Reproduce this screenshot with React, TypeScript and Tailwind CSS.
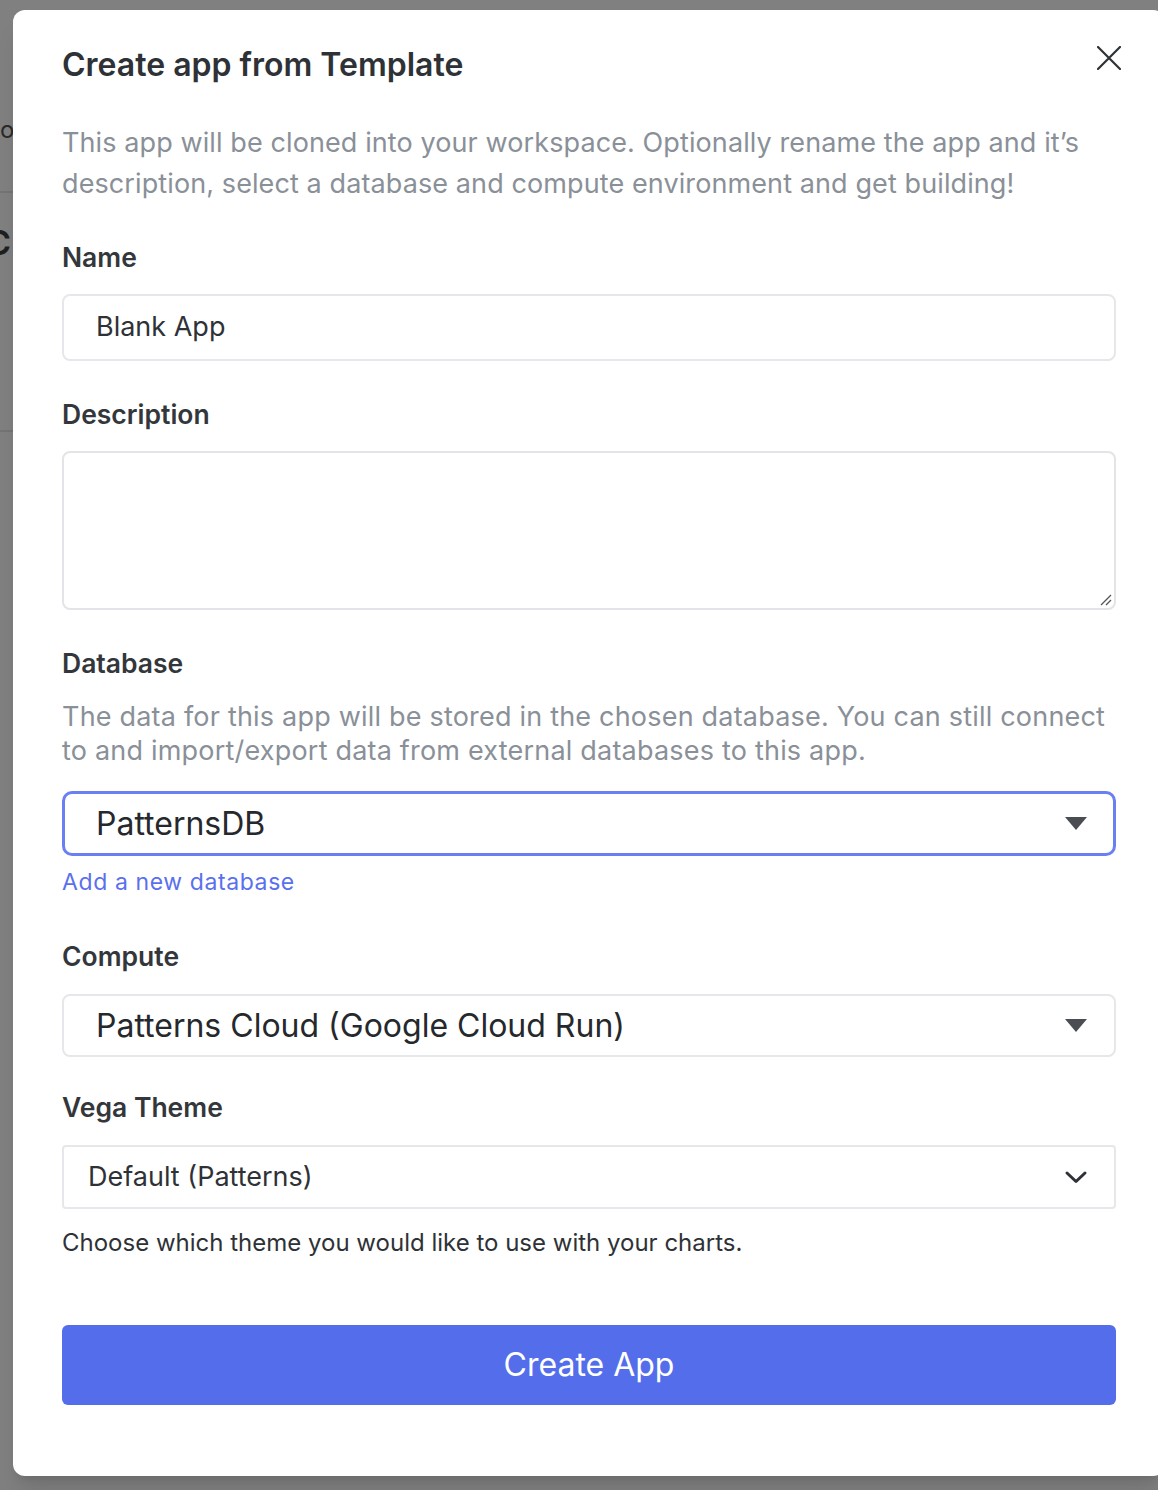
function Label({ children }: { children: React.ReactNode }) {
  return (
    <div className="text-[26.5px] font-semibold leading-[32px] text-[#33373b]">
      {children}
    </div>
  );
}

function CaretDown() {
  return (
    <svg width="22" height="13" viewBox="0 0 22 13" className="shrink-0">
      <path d="M0 0 L22 0 L11 13 Z" fill="#4a4d52" />
    </svg>
  );
}

export default function App() {
  return (
    <div
      className="relative h-[1490px] w-[1158px] overflow-hidden bg-[#808080] pl-[13px] pt-[10px]"
      style={{ fontFamily: "Inter, 'Noto Sans', sans-serif" }}
    >
      {/* page behind the overlay */}
      <div className="absolute left-0 top-[118px] text-[24px] leading-none text-[#2a2a2a]">o</div>
      <div className="absolute left-0 top-[191px] h-[2px] w-[13px] bg-[#747474]" />
      <div className="absolute left-[-14px] top-[226px] text-[34px] font-semibold leading-none text-[#1f1f1f]">C</div>
      <div className="absolute left-0 top-[430px] h-[2px] w-[13px] bg-[#747474]" />

      <div className="relative h-[1466px] w-[1152px] rounded-[12px] bg-white px-[49px] pt-[36px] shadow-xl">
        <div className="flex items-start justify-between">
          <h2 className="text-[32px] font-semibold leading-[38px] text-[#2e3236]">
            Create app from Template
          </h2>
          <button className="mr-[-5px] mt-[0px]">
            <svg width="24" height="24" viewBox="0 0 24 24">
              <path
                d="M1 1 L23 23 M23 1 L1 23"
                stroke="#2e3236"
                strokeWidth="2.2"
                strokeLinecap="round"
              />
            </svg>
          </button>
        </div>

        <p className="mt-[38px] text-[27px] leading-[41px] tracking-[0.1px] text-[#8a9098]">
          This app will be cloned into your workspace. Optionally rename the app and it’s
          description, select a database and compute environment and get building!
        </p>

        <div className="mt-[37px]">
          <Label>Name</Label>
          <div className="mt-[21px] flex h-[67px] items-center rounded-[8px] border-2 border-[#e6e7eb] px-[32px] text-[27px] text-[#2e3236]">
            Blank App
          </div>
        </div>

        <div className="mt-[37px]">
          <Label>Description</Label>
          <div className="relative mt-[21px] h-[159px] rounded-[8px] border-2 border-[#e2e4e8]">
            <svg
              width="14"
              height="14"
              viewBox="0 0 14 14"
              className="absolute bottom-[2px] right-[2px]"
            >
              <path d="M13 3 L3 13 M13 8 L8 13" stroke="#555" strokeWidth="1.3" />
            </svg>
          </div>
        </div>

        <div className="mt-[37px]">
          <Label>Database</Label>
          <p className="mt-[21px] text-[27px] leading-[34px] tracking-[0.2px] text-[#8a9098]">
            The data for this app will be stored in the chosen database. You can still connect
            to and import/export data from external databases to this app.
          </p>
          <div className="mt-[23px] flex h-[65px] items-center justify-between rounded-[10px] border-[3px] border-[#6a7ff1] pl-[31px] pr-[26px] text-[32px] text-[#25282c]">
            <span>PatternsDB</span>
            <CaretDown />
          </div>
          <div className="mt-[10px] text-[23px] leading-[32px] tracking-[0.6px] text-[#5b70ee]">
            Add a new database
          </div>
        </div>

        <div className="mt-[42px]">
          <Label>Compute</Label>
          <div className="mt-[22px] flex h-[63px] items-center justify-between rounded-[8px] border-2 border-[#e6e7eb] pl-[32px] pr-[27px] text-[32px] text-[#25282c]">
            <span>Patterns Cloud (Google Cloud Run)</span>
            <CaretDown />
          </div>
        </div>

        <div className="mt-[34px]">
          <Label>Vega Theme</Label>
          <div className="mt-[22px] flex h-[64px] items-center justify-between rounded-[4px] border-2 border-[#e6e7eb] pl-[24px] pr-[26px] text-[27px] text-[#2e3236]">
            <span>Default (Patterns)</span>
            <svg width="24" height="16" viewBox="0 0 24 16">
              <path
                d="M3 4 L12 12.5 L21 4"
                fill="none"
                stroke="#2e3236"
                strokeWidth="3"
                strokeLinecap="round"
                strokeLinejoin="round"
              />
            </svg>
          </div>
          <p className="mt-[18px] text-[24px] leading-[32px] text-[#2e3236]">
            Choose which theme you would like to use with your charts.
          </p>
        </div>

        <button className="mt-[66px] flex h-[80px] w-full items-center justify-center rounded-[6px] bg-[#546eeb] text-[32px] text-white">
          Create App
        </button>
      </div>
    </div>
  );
}
